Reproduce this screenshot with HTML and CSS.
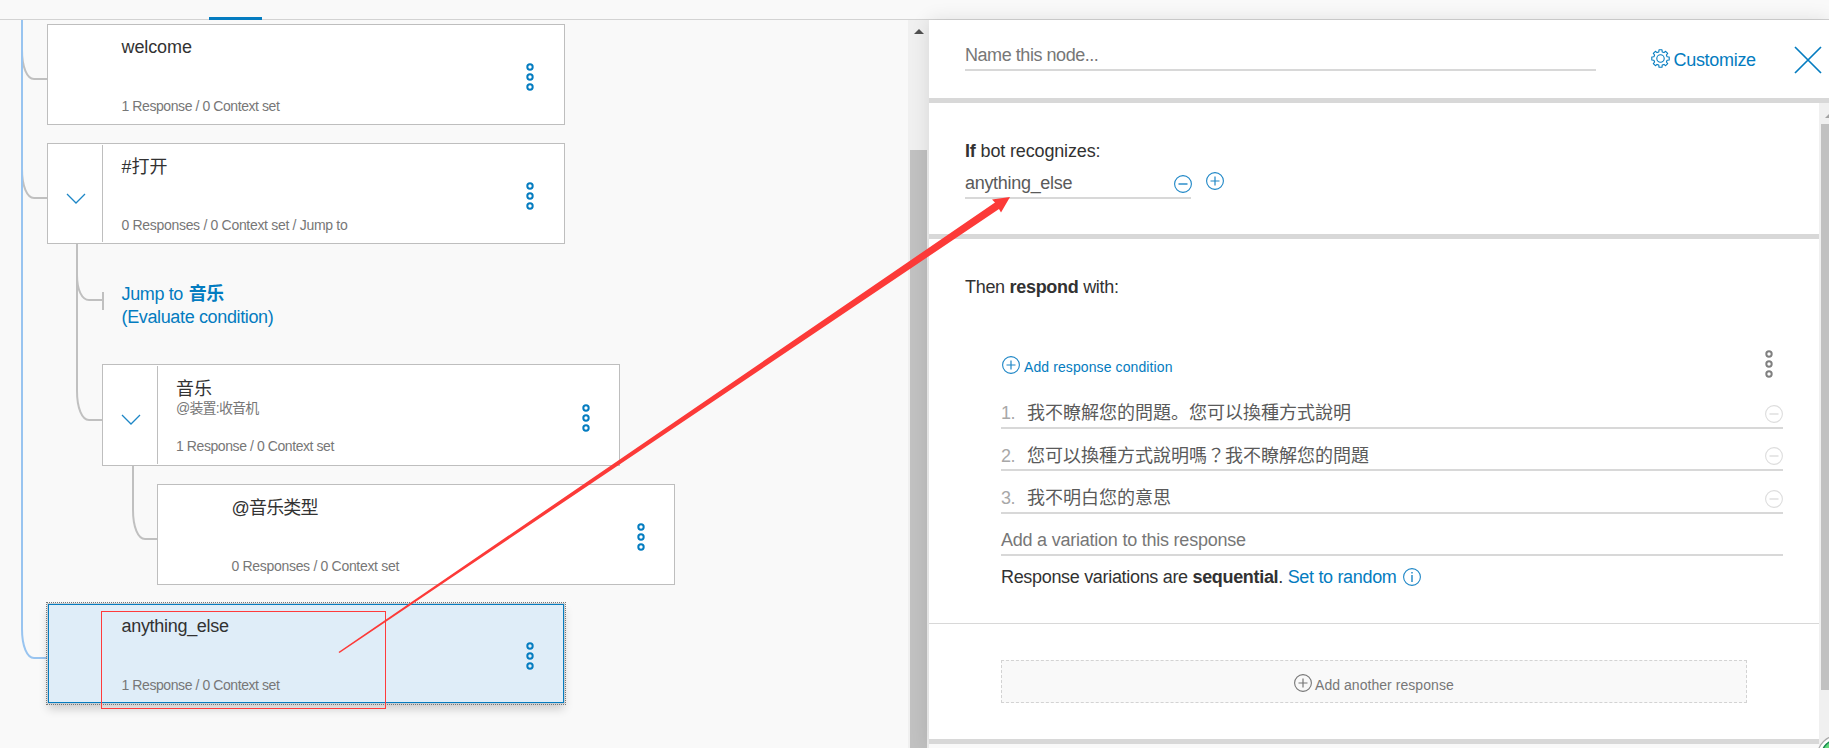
FILE: index.html
```html
<!DOCTYPE html>
<html lang="zh">
<head>
<meta charset="utf-8">
<title>Dialog</title>
<link rel="stylesheet" href="styles.css">
</head>
<body>
<svg class="defs" width="0" height="0">
  <defs>
    <symbol id="kebab" viewBox="0 0 10 30"><g fill="none" stroke="currentColor" stroke-width="2"><circle cx="5" cy="5" r="2.7"/><circle cx="5" cy="15" r="2.7"/><circle cx="5" cy="25" r="2.7"/></g></symbol>
    <symbol id="plus" viewBox="0 0 18 18"><circle cx="9" cy="9" r="8.4" fill="none" stroke="currentColor" stroke-width="1.1"/><path d="M4.5 9h9M9 4.5v9" stroke="currentColor" stroke-width="1.2"/></symbol>
    <symbol id="minus" viewBox="0 0 18 18"><circle cx="9" cy="9" r="8.4" fill="none" stroke="currentColor" stroke-width="1.1"/><path d="M4.5 9h9" stroke="currentColor" stroke-width="1.4"/></symbol>
    <symbol id="info" viewBox="0 0 18 18"><circle cx="9" cy="9" r="8.4" fill="none" stroke="currentColor" stroke-width="1.1"/><path d="M9 7v7M9 4v1.6" stroke="currentColor" stroke-width="1.4"/></symbol>
    <symbol id="chevron" viewBox="0 0 20 12"><path d="M1 1l9 9 9-9" fill="none" stroke="currentColor" stroke-width="1.3"/></symbol>
  </defs>
</svg>

<div class="app">
  <header class="topbar"><span class="tab"></span></header>
  <main class="workspace">
    <section class="tree">
      <svg class="links" width="908" height="728" viewBox="0 20 908 728" fill="none" stroke-width="2">
        <g stroke="#c0c0c0">
          <path d="M22 50C22 67 27 79 34 79H47"/>
          <path d="M22 169C22 186 27 198 34 198H47"/>
          <path d="M77 244V391C77 408 82 420 89 420H102"/>
          <path d="M77 275C77 290 82 300 89 300H103M103 292v18"/>
          <path d="M133 466V510C133 527 138 539 145 539H158"/>
        </g>
        <path stroke="#98c4f0" d="M22 20V629C22 646 27 658 34 658H47"/>
      </svg>

      <article class="card">
        <div class="card-toggle"></div>
        <div class="card-text"><div class="title">welcome</div><div class="meta">1 Response / 0 Context set</div></div>
        <svg class="kebab"><use href="#kebab"/></svg>
      </article>

      <article class="card">
        <div class="card-toggle split"><svg class="chevron"><use href="#chevron"/></svg></div>
        <div class="card-text"><div class="title cjk">#打开</div><div class="meta wide">0 Responses / 0 Context set / Jump to</div></div>
        <svg class="kebab"><use href="#kebab"/></svg>
      </article>

      <div class="jump">Jump to <b>音乐</b><br>(Evaluate condition)</div>

      <article class="card level-1">
        <div class="card-toggle split"><svg class="chevron"><use href="#chevron"/></svg></div>
        <div class="card-text"><div class="title cjk">音乐<div class="sub">@装置:收音机</div></div><div class="meta">1 Response / 0 Context set</div></div>
        <svg class="kebab"><use href="#kebab"/></svg>
      </article>

      <article class="card level-2">
        <div class="card-toggle"></div>
        <div class="card-text"><div class="title cjk type">@音乐类型</div><div class="meta wide">0 Responses / 0 Context set</div></div>
        <svg class="kebab"><use href="#kebab"/></svg>
      </article>

      <article class="card selected">
        <div class="card-toggle"></div>
        <div class="card-text"><div class="title long">anything_else</div><div class="meta">1 Response / 0 Context set</div></div>
        <svg class="kebab"><use href="#kebab"/></svg>
      </article>
    </section>

    <div class="scroll-left"><span class="scroll-up"></span><span class="thumb"></span></div>

    <section class="panel">
      <div class="panel-head">
        <div class="name-field">Name this node...</div>
        <div class="customize">
          <svg class="gear" viewBox="-9.5 -9.5 19 19" fill="none" stroke="currentColor" stroke-width="1.1">
            <circle r="3.7"/>
            <path stroke-linejoin="round" d="M-1.7-6.6L-1.5-8.7H1.5L1.7-6.6L3.5-5.9L5.1-7.2L7.2-5.1L5.9-3.5L6.6-1.7L8.7-1.5V1.5L6.6 1.7L5.9 3.5L7.2 5.1L5.1 7.2L3.5 5.9L1.7 6.6L1.5 8.7H-1.5L-1.7 6.6L-3.5 5.9L-5.1 7.2L-7.2 5.1L-5.9 3.5L-6.6 1.7L-8.7 1.5V-1.5L-6.6-1.7L-5.9-3.5L-7.2-5.1L-5.1-7.2L-3.5-5.9Z"/>
          </svg>
          <span>Customize</span>
        </div>
        <svg class="close" viewBox="0 0 28 28"><path d="M1 1l26 26M27 1L1 27" stroke="currentColor" stroke-width="1.7"/></svg>
      </div>

      <div class="panel-body">
        <div class="panel-content">
          <div class="condition">
            <div class="label recognizes"><b>If</b> bot recognizes:</div>
            <div class="condition-row">
              <div class="condition-field"><span>anything_else</span><svg class="icon"><use href="#minus"/></svg></div>
              <svg class="icon add"><use href="#plus"/></svg>
            </div>
          </div>

          <div class="responses">
            <div class="label respond">Then <b>respond</b> with:</div>
            <div class="response-tools">
              <svg class="icon"><use href="#plus"/></svg><span class="add-condition">Add response condition</span>
              <svg class="kebab"><use href="#kebab"/></svg>
            </div>
            <div class="variation"><span class="num">1.</span><span class="variation-text">我不瞭解您的問題。您可以換種方式說明</span><svg class="icon"><use href="#minus"/></svg></div>
            <div class="variation second"><span class="num">2.</span><span class="variation-text" lang="zh-TW">您可以換種方式說明嗎？我不瞭解您的問題</span><svg class="icon"><use href="#minus"/></svg></div>
            <div class="variation third"><span class="num">3.</span><span class="variation-text" lang="zh-TW">我不明白您的意思</span><svg class="icon"><use href="#minus"/></svg></div>
            <div class="variation empty">Add a variation to this response</div>
            <div class="mode"><span>Response variations are <b>sequential</b>. </span><span class="link">Set to random</span><svg class="icon"><use href="#info"/></svg></div>
          </div>

          <div class="another">
            <div class="another-box"><svg class="icon"><use href="#plus"/></svg><span>Add another response</span></div>
          </div>
        </div>
        <div class="scroll-right"><span class="scroll-up"></span><span class="thumb"></span></div>
      </div>
    </section>
  </main>

  <svg class="annotations" width="1829" height="748" viewBox="0 0 1829 748">
    <rect x="101.5" y="611.5" width="284" height="97" fill="none" stroke="#ff3b3b"/>
    <path fill="#fc3a38" d="M338.5 652L995 202.5L992 199.5L1010 197L1001 212.5L999 209L339.5 653Z"/>
    <circle cx="1838" cy="756" r="20.5" fill="#fff" stroke="#aaa" stroke-width="1.2"/>
    <circle cx="1838" cy="756" r="16.5" fill="#62d87c" stroke="#16884f" stroke-width="1.5"/>
  </svg>
</div>
</body>
</html>
```

FILE: styles.css
```css
* { box-sizing: border-box; }

body {
  margin: 0;
  font: 18px/24px "Liberation Sans", "Noto Sans CJK SC", sans-serif;
  color: #323232;
  background: #f9f9f9;
}

.defs { position: absolute; }

.app {
  position: relative;
  display: flex;
  flex-direction: column;
  width: 1829px;
  height: 748px;
  overflow: hidden;
}

.topbar {
  display: flex;
  align-items: flex-end;
  height: 20px;
  padding-left: 209px;
  border-bottom: 1px solid #d3d3d3;
}
.tab { width: 53px; height: 3px; margin-bottom: -1px; background: #047cc0; z-index: 1; }

.workspace { display: flex; height: 728px; }

/* Dialog tree */
.tree { position: relative; width: 908px; padding: 4px 0 0 47px; }
.links { position: absolute; left: 0; top: 0; }

.card {
  position: relative;
  display: flex;
  width: 518px;
  height: 101px;
  margin-bottom: 18px;
  background: #fff;
  border: 1px solid #bebebe;
}
.card-toggle { width: 55px; margin: 1px 0; }
.card-toggle.split { border-right: 1px solid #bebebe; padding: 48px 0 0 18px; }
.chevron { display: block; width: 20px; height: 12px; color: #1d86c6; }
.card-text {
  display: flex;
  flex-direction: column;
  justify-content: space-between;
  width: 423px;
  padding: 10px 0 8px 18.5px;
}
.title { letter-spacing: -0.1px; }
.title.cjk { letter-spacing: 0; margin-top: 1px; }
.title.type { letter-spacing: -0.8px; }
.title.long { letter-spacing: -0.3px; }
.sub { font-size: 14px; line-height: 20px; letter-spacing: -0.8px; color: #777; margin-top: -3px; }
.meta { font-size: 14px; line-height: 20px; letter-spacing: -0.42px; color: #777; }
.meta.wide { letter-spacing: -0.31px; }
.kebab { width: 10px; height: 30px; color: #047cc0; }
.card .kebab { margin-top: 36.5px; margin-left: -1px; }

.jump {
  height: 101px;
  margin: 39px 0 0 74.5px;
  line-height: 23px;
  letter-spacing: -0.36px;
  color: #047cc0;
}
.jump b { margin-left: 1px; }

.level-1 { margin-left: 55px; margin-top: -20px; height: 102px; }
.level-1 .card-text { padding: 11px 0 9px 18px; }
.level-1 .kebab { margin-left: 0; margin-top: 37.5px; }
.level-2 { margin-left: 110px; }
.level-2 .kebab { margin-left: 0; }
.selected {
  background: #dfedf8;
  border-color: #047cc0;
  width: 516px;
  height: 99px;
  margin: 19px 0 0 1px;
  outline: 1px dotted #777;
  outline-offset: 1px;
  box-shadow: 0 0 0 1px #c8cdd1, 0 6px 9px rgba(0, 0, 0, 0.18);
}
.selected .card-toggle { width: 54px; }
.selected .card-text { padding: 9px 0 7px 18.5px; }
.selected .kebab { margin-top: 35.5px; }

/* Scrollbars */
.scroll-left { width: 21px; background: #f0f0f0; padding: 9px 2px 0; }
.scroll-up {
  display: block;
  width: 0;
  height: 0;
  margin-left: 4px;
  border: 5px solid transparent;
  border-top: 0;
  border-bottom-color: #505050;
}
.scroll-left .thumb { display: block; width: 17px; height: 598px; margin-top: 116px; background: #c1c1c1; }
.scroll-right { width: 10px; height: 645px; overflow: hidden; background: #f0f0f0; padding: 10px 0 0 2px; }
.scroll-right .scroll-up { border-bottom-color: #a3a3a3; }
.scroll-right .thumb { display: block; width: 17px; height: 566px; margin-top: 6px; background: #c1c1c1; }

/* Node editor */
.panel { position: relative; width: 900px; background: #fff; box-shadow: 0 0 18px rgba(0, 0, 0, 0.11); }
.panel-head {
  display: flex;
  align-items: flex-start;
  height: 83px;
  padding: 23px 0 0 36px;
  border-bottom: 5px solid #d8d8d8;
}
.name-field { width: 631px; height: 28px; letter-spacing: -0.45px; color: #777; border-bottom: 2px solid #d8d8d8; }
.customize { display: flex; margin: 5px 0 0 54.5px; width: 143px; color: #047cc0; letter-spacing: -0.3px; }
.gear { width: 19px; height: 19px; margin: 1px 4px 0 0; }
.close { width: 28px; height: 28px; margin-top: 3px; color: #047cc0; }

.icon { flex: none; display: block; width: 18px; height: 18px; color: #1d86c6; }
.panel-body { display: flex; height: 645px; }
.panel-content { width: 890px; background: #f9f9f9; }
.condition { height: 136px; padding: 36px 0 0 36px; background: #fff; border-bottom: 5px solid #d8d8d8; }
.recognizes { letter-spacing: -0.15px; }
.condition-row { display: flex; margin-top: 8px; }
.condition-field {
  display: flex;
  width: 226px;
  height: 28px;
  border-bottom: 2px solid #d8d8d8;
  color: #5a5a5a;
  letter-spacing: -0.3px;
}
.condition-field span { flex: none; width: 209px; }
.condition-field .icon { margin-top: 4px; }
.add { margin: 1px 0 0 15px; }

.responses { height: 385px; padding: 36px 36px 0 72px; background: #fff; border-bottom: 1px solid #d8d8d8; }
.respond { margin-left: -36px; letter-spacing: -0.3px; }
.response-tools { display: flex; margin-top: 50px; height: 31px; }
.response-tools .icon { margin: 7px 0 0 1px; }
.add-condition { width: 740px; margin: 8px 0 0 4px; font-size: 14px; letter-spacing: 0.1px; line-height: 20px; color: #047cc0; }
.response-tools .kebab { color: #808080; }
.variation {
  display: flex;
  width: 782px;
  height: 42px;
  padding-top: 15px;
  border-bottom: 2px solid #d8d8d8;
}
.response-tools + .variation { height: 49px; padding-top: 21px; }
.variation.third { height: 43px; }
.num { width: 26px; color: #a8a8a8; letter-spacing: -0.6px; }
.variation-text { width: 738px; color: #5a5a5a; font-family: "Liberation Sans", "Noto Sans CJK TC", sans-serif; }
.variation-text:not([lang]) { font-family: "Liberation Sans", "Noto Sans CJK SC", sans-serif; }
.variation .icon { color: #ddd; margin-top: 4px; }
.variation.second .icon { margin-top: 3px; }
.variation.empty { padding-top: 14px; letter-spacing: -0.23px; color: #777; }
.mode { display: flex; margin-top: 9px; letter-spacing: -0.32px; white-space: pre; }
.mode .link { color: #047cc0; }
.mode .icon { margin: 3px 0 0 6px; }

.another { height: 120px; padding: 36px 72px 0; background: #fff; border-bottom: 5px solid #d8d8d8; }
.another-box {
  display: flex;
  width: 746px;
  height: 43px;
  padding: 13px 0 0 292px;
  background: #f9f9f9;
  border: 1px dashed #d3d3d3;
  color: #777;
  font-size: 14px;
  line-height: 20px;
}
.another-box span { margin: 1px 0 0 3px; letter-spacing: 0.05px; }
.another-box .icon { color: #777; }

.annotations { position: absolute; left: 0; top: 0; pointer-events: none; }
```
